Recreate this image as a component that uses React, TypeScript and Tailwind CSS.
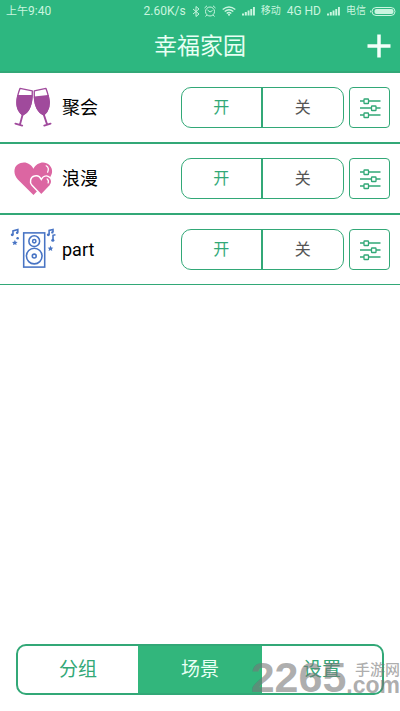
import React, { useState } from 'react';

const GlassesIcon = () => (
    <svg viewBox="0 0 44 44" className="w-11 h-[43px]" fill="none" stroke="#a04a9c" strokeWidth="1.4" strokeLinejoin="round" strokeLinecap="round">
        <path d="M9.700 2.500 22.300 5C22.500 16 20.500 26 12.500 29.500C5 24 5.500 13 9.700 2.500Z" />
        <path d="M7.600 10H21.800C21.500 18 19 27 12.500 29.500C6 25 5.800 17 7.600 10Z" fill="#a04a9c" />
        <path d="M12.500 29 9.700 39.500M5 38.500 12 40.500" strokeWidth="1.900" />
        <path d="M36.300 2.500 24.300 5C24 16 26 26 34 29.500C41 24 40.500 13 36.300 2.500Z" />
        <path d="M24.500 11.500 38.600 10C40.500 17 40 25 34 29.500C27.500 27 25 19 24.500 11.500Z" fill="#a04a9c" />
        <path d="M34 29 37.500 39.500M34.500 40.500 41 38.500" strokeWidth="1.900" />
    </svg>
);

const HeartsIcon = () => (
    <svg viewBox="0 0 44 44" className="w-11 h-[43px]" fill="#dc66a2">
        <path d="M23.500 39 7.500 23C3 18 3 11 7 8C13 3.500 20 5.500 23.500 12C27 5.500 35 3.500 40 8.500C44 13 43 18 39.500 22Z" />
        <path
            d="M31.500 39 22 29C19 25.500 20.500 20.500 24.500 19.500C27.500 18.500 30 20 31.500 23C33 20 36 18.500 39 20C43 22 43 26.500 40.500 29.500Z"
            stroke="#fff"
            strokeWidth="1.500"
        />
        <path d="M36.500 9Q40 11 38 15.500M37.500 22.500Q39.500 24 38.500 26.500" fill="none" stroke="#fff" strokeWidth="1.300" strokeLinecap="round" />
    </svg>
);

const SpeakerIcon = () => (
    <svg viewBox="0 0 44 44" className="w-11 h-[43px] overflow-visible" fill="none" stroke="#4874c4" strokeWidth="1.600">
        <rect x="13.500" y="5" width="21.500" height="35" />
        <circle cx="24.300" cy="13.500" r="5.500" />
        <circle cx="24.300" cy="13.500" r="1.700" />
        <circle cx="24.300" cy="28.700" r="8" />
        <circle cx="24.300" cy="28.700" r="2" />
        <path d="M2.500 7V3L7.500 1.500V4.500M39.500 7V2.500L43.500 1.500V4M43.500 12.500V7.500L46 7" />
        <g fill="#4874c4" stroke="none">
            <circle cx="1.800" cy="7" r="1.500" />
            <circle cx="6.800" cy="4.800" r="1.300" />
            <circle cx="38.700" cy="7" r="1.500" />
            <circle cx="42.800" cy="4.500" r="1.200" />
            <circle cx="43.300" cy="12.500" r="1.600" />
            <circle cx="7.300" cy="10.500" r="1.300" />
            <path d="M4.500 12 5.300 14 7.300 14.200 5.800 15.500 6.200 17.500 4.500 16.500 2.500 17.500 3 15.500 1.500 14.200 3.700 14Z" />
            <path d="M41 18 41.800 20 43.800 20.200 42.300 21.500 42.700 23.500 41 22.500 39 23.500 39.500 21.500 38 20.200 40.200 20Z" />
        </g>
    </svg>
);

const SlidersIcon = () => (
    <svg viewBox="0 0 22 22" className="w-[22px] h-[22px]" fill="none" stroke="#32a877" strokeWidth="1.300">
        <path d="M1 4H5M10 4H21.500M1 11H12.500M17 11H21.500M1 18H5M10 18H21.500" />
        <rect x="5" y="2" width="4.500" height="4.500" rx=".6" />
        <rect x="12.500" y="9" width="4.500" height="4.500" rx=".6" />
        <rect x="5" y="16" width="4.500" height="4.500" rx=".6" />
    </svg>
);

const SignalIcon = () => (
    <svg viewBox="0 0 13 10" className="w-[13px] h-2.5" fill="currentColor">
        <path d="M0 7.500H2V9.500H0ZM2.800 6H4.800V9.500H2.800ZM5.600 4.500H7.500V9.500H5.600ZM8.300 3H10.200V9.500H8.300ZM11 1H12.900V9.500H11Z" />
    </svg>
);

const StatusBar = () => (
    <div className="flex items-center justify-between h-[22px] pl-1.5 pr-1 text-xs text-[#c9f5df]">
        <span>
            <span className="text-[11px]">上午</span>9:40
        </span>
        <div className="flex items-center">
            <span>2.60K/s</span>
            <svg viewBox="0 0 8 11" className="w-2 h-[11px] ml-1.5" fill="none" stroke="currentColor">
                <path d="M1 3 7 8 4 10.500V.5L7 3 1 8" />
            </svg>
            <svg viewBox="0 0 12 12" className="w-3 h-3 ml-1" fill="none" stroke="currentColor">
                <circle cx="6" cy="6.500" r="4.500" />
                <path d="M3.500 5 6 7 8.500 5.500M.5 3 3 .8M9 .8 11.500 3M2.800 10 1.500 11.500M9.200 10 10.500 11.500" />
            </svg>
            <svg viewBox="0 0 14 10" className="w-3.5 h-2.5 ml-1.5 mr-1.5" fill="none" stroke="currentColor" strokeWidth="1.400">
                <path d="M.7 3.500Q7-1.500 13.300 3.500M2.700 5.500Q7 2 11.300 5.500M4.700 7.500Q7 5.500 9.300 7.500" />
                <circle cx="7" cy="8.700" r="1" fill="currentColor" stroke="none" />
            </svg>
            <SignalIcon />
            <span className="ml-1.5 text-[10px]">移动</span>
            <span className="ml-1.5">4G HD</span>
            <span className="ml-1.5 mr-1.5"><SignalIcon /></span>
            <span className="text-[10px]">电信</span>
            <svg viewBox="0 0 26 9" className="w-[26px] h-[9px] ml-1" fill="none" stroke="currentColor">
                <rect x="2" y=".5" width="23" height="8" rx="4" />
                <path d="M.7 3.500V5.500" />
                <rect x="4.500" y="2" width="19" height="5" rx="2" fill="currentColor" stroke="none" />
            </svg>
        </div>
    </div>
);

const scenes = [
    { name: '聚会', icon: GlassesIcon, line: 'border-b-2' },
    { name: '浪漫', icon: HeartsIcon, line: 'border-b-2' },
    { name: 'part', icon: SpeakerIcon, line: 'border-b' },
];

const tabs = ['分组', '场景', '设置'];

export default function App() {
    const [tab, setTab] = useState('场景');

    return (
        <div className="relative flex flex-col min-h-screen bg-white font-['Roboto','Noto_Sans_CJK_SC',sans-serif]">
            <header className="bg-[#2db780] border-b-2 border-[#32a877]">
                <StatusBar />
                <div className="grid grid-cols-[1fr_auto_1fr] items-center h-12 px-2 mb-px">
                    <h1 className="col-start-2 pt-0.5 text-[23px] text-[#e8fff4]">幸福家园</h1>
                    <button aria-label="添加" className="justify-self-end">
                        <svg viewBox="0 0 26 26" className="w-[26px] h-[26px]" stroke="#f4fffa" strokeWidth="3.500">
                            <path d="M13 1.500V24.500M1.500 13H24.500" />
                        </svg>
                    </button>
                </div>
            </header>

            <main className="flex-1">
                {scenes.map((scene) => (
                    <section key={scene.name} className={`flex items-center px-2.5 py-[13px] border-[#32a877] ${scene.line}`}>
                        <scene.icon />
                        <h2 className="flex-1 ml-2 text-lg leading-7 text-black">{scene.name}</h2>
                        <div className="grid grid-cols-2 w-[163px] h-[41px] border border-[#32a877] rounded-[10px]">
                            <button className="border-r-2 border-[#32a877] text-base text-[#32a877]">开</button>
                            <button className="text-base text-[#555]">关</button>
                        </div>
                        <button aria-label={`${scene.name} 设置`} className="flex items-center justify-center ml-[5px] w-[41px] h-[41px] border border-[#32a877] rounded-sm">
                            <SlidersIcon />
                        </button>
                    </section>
                ))}
            </main>

            <nav className="grid grid-cols-[1fr_34%_1fr] mx-4 mb-4 h-[51px] border-2 border-[#32a877] rounded-[10px] overflow-hidden">
                {tabs.map((item) => (
                    <button
                        key={item}
                        onClick={() => setTab(item)}
                        className={`pt-0.5 text-[19px] ${item === tab ? 'bg-[#32b67c] text-[#e8fff4]' : 'text-[#32a877]'}`}
                    >
                        {item}
                    </button>
                ))}
            </nav>

            <div className="absolute right-0 bottom-[18px] flex items-end text-[#777]/60 font-bold pointer-events-none">
                <span className="font-['Liberation_Sans',sans-serif] text-[43px] leading-8">2265</span>
                <span className="flex flex-col items-end">
                    <span className="text-[15px] leading-4 font-medium font-['Noto_Sans_CJK_SC',sans-serif]">手游网</span>
                    <span className="font-['Liberation_Sans',sans-serif] text-[23px] leading-4">.com</span>
                </span>
            </div>
        </div>
    );
}
